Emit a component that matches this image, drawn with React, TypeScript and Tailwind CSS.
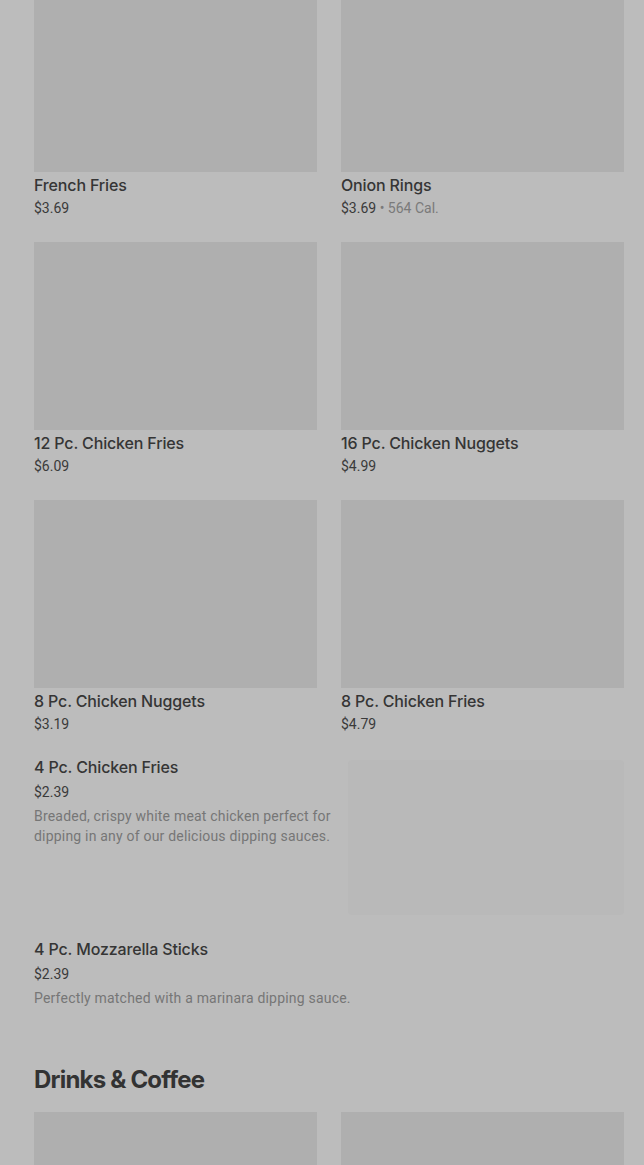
import React from "react";

const grid = [
  { name: "French Fries", price: "$3.69" },
  { name: "Onion Rings", price: "$3.69", cal: "564 Cal." },
  { name: "12 Pc. Chicken Fries", price: "$6.09" },
  { name: "16 Pc. Chicken Nuggets", price: "$4.99" },
  { name: "8 Pc. Chicken Nuggets", price: "$3.19" },
  { name: "8 Pc. Chicken Fries", price: "$4.79" },
];

function Card({ name, price, cal }: { name: string; price: string; cal?: string }) {
  return (
    <div className="flex flex-col">
      <div className="h-[188px] bg-[#afafaf]" />
      <div className="mt-[3px] text-[16px] leading-5 font-medium tracking-[-0.15px] text-[#353535] font-['Inter',sans-serif]">{name}</div>
      <div className="mt-[3px] text-[14px] leading-5 text-[#3a3a3a] font-['Roboto',sans-serif]">
        {price}
        {cal && <span className="text-[#7a7a7a]"> • {cal}</span>}
      </div>
    </div>
  );
}

export default function App() {
  return (
    <div className="w-[644px] h-[1165px] overflow-hidden bg-[#bcbcbc]">
      <div className="pl-[34px] pr-[20px] -mt-[16px]">
        <div className="grid grid-cols-2 gap-x-6 gap-y-6">
          {grid.map((g) => (
            <Card key={g.name} {...g} />
          ))}
        </div>

        <div className="mt-[23px] flex gap-3">
          <div className="flex-1 flex flex-col">
            <div className="text-[16px] leading-5 font-medium tracking-[-0.15px] text-[#353535] font-['Inter',sans-serif]">4 Pc. Chicken Fries</div>
            <div className="mt-[5px] text-[14px] leading-5 text-[#3a3a3a] font-['Roboto',sans-serif]">$2.39</div>
            <div className="mt-1 text-[14px] leading-5 tracking-[0.2px] text-[#767676] font-['Roboto',sans-serif]">
              Breaded, crispy white meat chicken perfect for dipping in any of our delicious dipping sauces.
            </div>
          </div>
          <div className="w-[276px] h-[155px] mt-[3px] bg-[#b9b9b9] rounded-sm shrink-0" />
        </div>

        <div className="mt-[24px] flex flex-col">
          <div className="text-[16px] leading-5 font-medium tracking-[-0.15px] text-[#353535] font-['Inter',sans-serif]">4 Pc. Mozzarella Sticks</div>
          <div className="mt-[5px] text-[14px] leading-5 text-[#3a3a3a] font-['Roboto',sans-serif]">$2.39</div>
          <div className="mt-1 text-[14px] leading-5 tracking-[0.2px] text-[#767676] font-['Roboto',sans-serif]">
            Perfectly matched with a marinara dipping sauce.
          </div>
        </div>

        <h2 className="mt-[56px] text-[24px] leading-8 font-bold tracking-[-0.8px] text-[#333333] font-['Inter',sans-serif]">Drinks &amp; Coffee</h2>

        <div className="mt-[16px] grid grid-cols-2 gap-x-6">
          <div className="h-[188px] bg-[#afafaf]" />
          <div className="h-[188px] bg-[#afafaf]" />
        </div>
      </div>
    </div>
  );
}
